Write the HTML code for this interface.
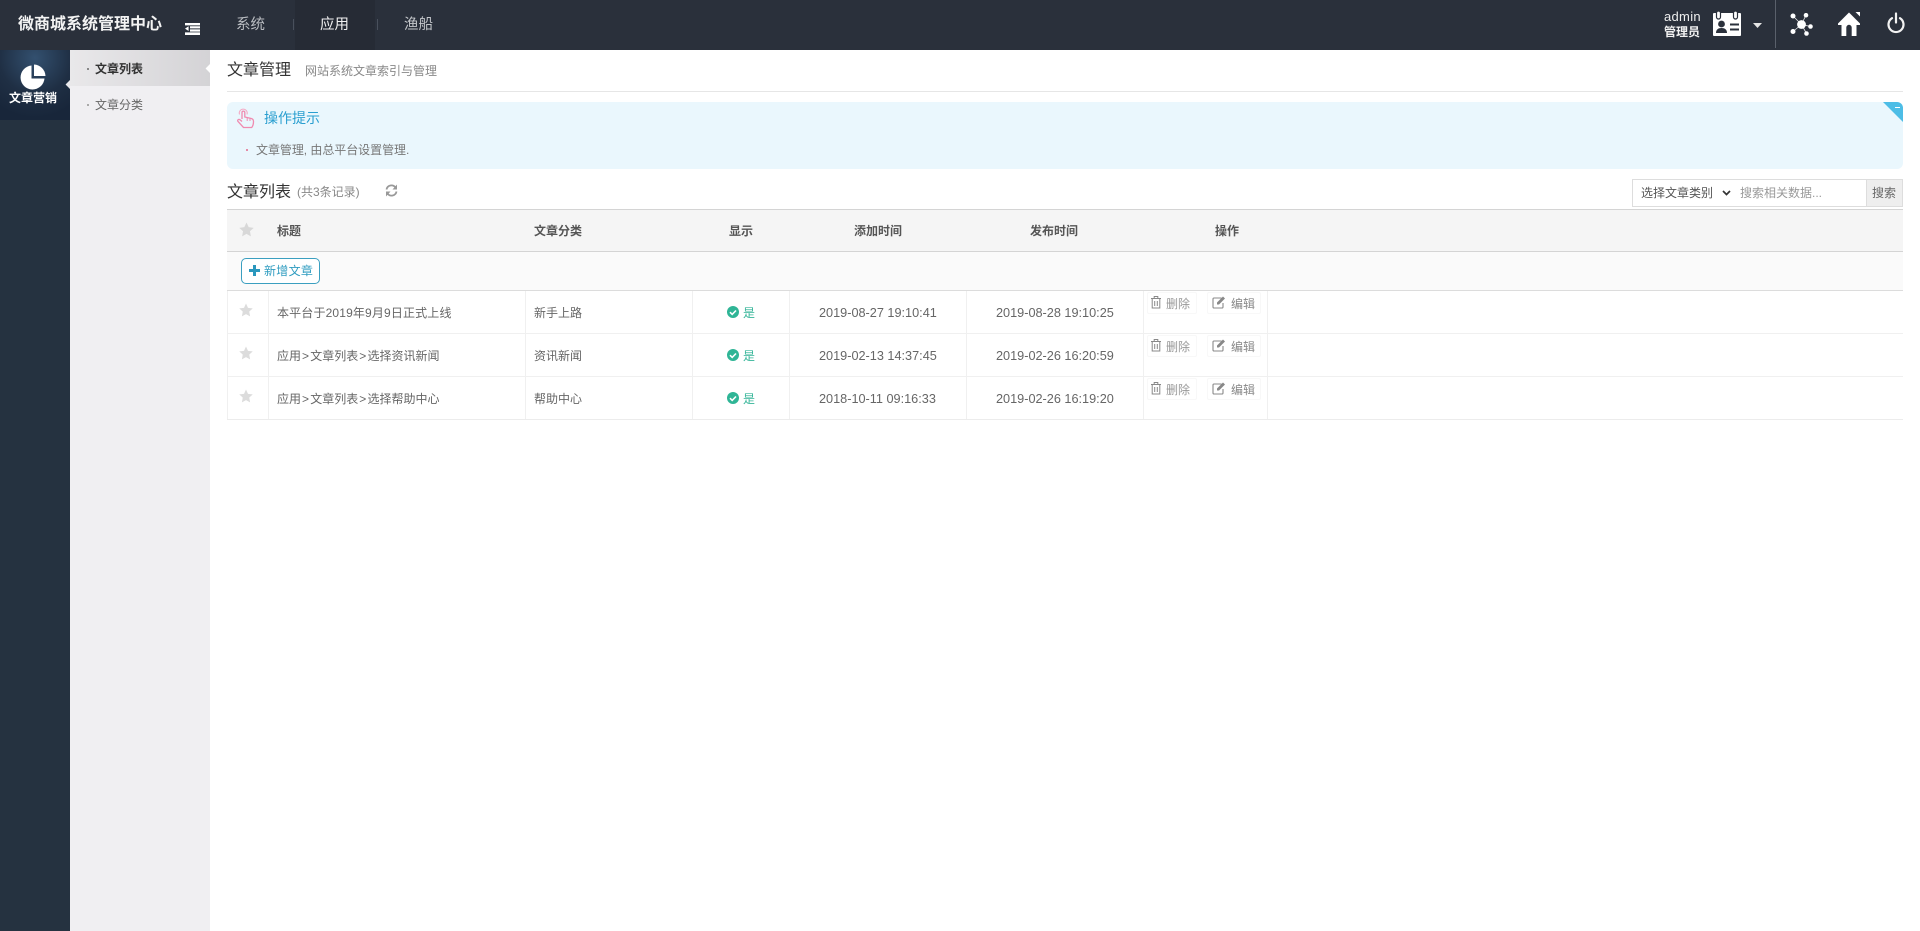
<!DOCTYPE html>
<html lang="zh"><head><meta charset="utf-8"><title>文章管理</title>
<style>
*{box-sizing:border-box}
html,body{margin:0;padding:0;width:1920px;height:931px;overflow:hidden;background:#fff;font-family:"Liberation Sans","Noto Sans CJK SC",sans-serif;font-size:12px;color:#666}
.a{position:absolute;white-space:nowrap}
.t{position:absolute;white-space:nowrap;line-height:20px;height:20px}
.b{position:absolute}
svg{position:absolute;display:block}
.d{font-size:12.7px;color:#666}
.h{font-weight:bold;color:#555}
.g{letter-spacing:1.2px;margin-left:1px}
.op{position:absolute;height:22px;background:#fff;border:1px solid #f8f8f8;border-radius:2px}
</style></head><body>

<!-- top bar -->
<div class="b" style="left:0;top:0;width:1920px;height:50px;background:#2a303b"></div>
<div class="b" style="left:295px;top:0;width:80px;height:50px;background:#262b35"></div>
<div class="b" style="left:293px;top:19px;width:1px;height:11px;background:#49505c"></div>
<div class="b" style="left:377px;top:19px;width:1px;height:11px;background:#49505c"></div>
<div class="t" style="left:18px;top:15px;font-size:16px;font-weight:bold;color:#f3f3f3">微商城系统管理中心</div>
<svg style="left:185px;top:23px" width="15" height="12" viewBox="0 0 15 12"><path d="M0 0h15v2.4H0zM5 3.2h10v2.2H5zM5 6.4h10v2.2H5zM0 9.4h15V12H0zM0 5.6L3.6 3.2V8z" fill="#fff"/></svg>
<div class="t" style="left:236px;top:15px;font-size:14.5px;color:#b9bcc1">系统</div>
<div class="t" style="left:320px;top:15px;font-size:14.5px;color:#f2f2f2">应用</div>
<div class="t" style="left:404px;top:15px;font-size:14.5px;color:#c4c7cb">渔船</div>

<div class="a" style="left:1664px;top:9px;font-size:13px;line-height:15px;color:#eee;letter-spacing:.3px">admin</div>
<div class="a" style="left:1664px;top:24px;font-size:12px;line-height:16px;font-weight:bold;color:#f1f1f1">管理员</div>
<svg style="left:1713px;top:10px" width="30" height="28" viewBox="0 0 30 28"><path d="M1 3h26a1 1 0 0 1 1 1v21a1 1 0 0 1-1 1H1a1 1 0 0 1-1-1V4a1 1 0 0 1 1-1z" fill="#fff"/><rect x="3.500" y="1" width="4" height="8" rx="2" fill="#fff" stroke="#2a303b" stroke-width="1.200"/><rect x="20.500" y="1" width="4" height="8" rx="2" fill="#fff" stroke="#2a303b" stroke-width="1.200"/><circle cx="8.500" cy="14" r="3.400" fill="#2a303b"/><path d="M3 23c0-3.500 2.200-5 5.500-5s5.500 1.500 5.500 5z" fill="#2a303b"/><path d="M17 13.500h9v2h-9zM17 18.500h9v2h-9z" fill="#2a303b"/></svg>
<svg style="left:1753px;top:23px" width="9" height="5" viewBox="0 0 9 5"><path d="M0 0h9L4.500 5z" fill="#e5e5e5"/></svg>
<div class="b" style="left:1775px;top:0;width:1px;height:48px;background:#5a606b"></div>
<svg style="left:1790px;top:13px" width="23" height="23" viewBox="0 0 23 23"><path d="M3 3L11.500 11.500M16 2L11.500 11.500M20.500 13.500L11.500 11.500M16.500 20.500L11.500 11.500M3 18.500L11.500 11.500" stroke="#e8e8e8" stroke-width=".8"/><circle cx="11.500" cy="11.500" r="4.400" fill="#fff"/><circle cx="3" cy="3" r="2.500" fill="#fff"/><circle cx="16" cy="2.200" r="2.300" fill="#fff"/><circle cx="20.500" cy="13.500" r="2.300" fill="#fff"/><circle cx="16.500" cy="20.500" r="2.300" fill="#fff"/><circle cx="3" cy="18.500" r="2.500" fill="#fff"/></svg>
<svg style="left:1837px;top:11px" width="24" height="25" viewBox="0 0 24 25"><path d="M12 1.500L1 12.500V14h3.500v11h4.800v-8.500a2.700 2.700 0 0 1 5.400 0V25h4.800V14H23v-1.500z" fill="#fff"/><path d="M18.500 1h4.500v4.500z" fill="#fff"/></svg>
<svg style="left:1887px;top:12px" width="18" height="22" viewBox="0 0 18 22"><path d="M5 6.200a7.500 7.500 0 1 0 8 0" fill="none" stroke="#f2f2f2" stroke-width="2.200" stroke-linecap="round"/><path d="M9 1.500v9" stroke="#f2f2f2" stroke-width="2.200" stroke-linecap="round"/></svg>

<!-- left sidebars -->
<div class="b" style="left:0;top:50px;width:70px;height:881px;background:#253240"></div>
<div class="b" style="left:0;top:50px;width:70px;height:70px;background:radial-gradient(ellipse 60px 60px at 35px 8px,#33506f 0%,#1f2f44 60%,#18263a 100%)"></div>
<svg style="left:20px;top:64px" width="26" height="26" viewBox="0 0 26 26"><path d="M11.500 1.500A12 12 0 1 0 24.500 14.500H11.500z" fill="#fff"/><path d="M14 0.500A12 12 0 0 1 25.500 12H14z" fill="#fff"/></svg>
<div class="t" style="left:9px;top:88px;font-size:12px;font-weight:bold;color:#fff">文章营销</div>
<div class="b" style="left:66.500px;top:80.500px;width:7px;height:7px;background:#e9e9ec;transform:rotate(45deg)"></div>
<div class="b" style="left:70px;top:50px;width:140px;height:881px;background:#f0eff2"></div>
<div class="b" style="left:70px;top:50px;width:140px;height:36px;background:linear-gradient(90deg,#e9e8ea,#d4d3d6)"></div>
<div class="b" style="left:206.500px;top:64.500px;width:7px;height:7px;background:#fff;transform:rotate(45deg)"></div>
<div class="b" style="left:87px;top:68px;width:2px;height:2px;background:#888"></div>
<div class="b" style="left:87px;top:104px;width:2px;height:2px;background:#aaa"></div>
<div class="t" style="left:95px;top:59px;color:#333;font-weight:bold">文章列表</div>
<div class="t" style="left:95px;top:95px;color:#666">文章分类</div>

<!-- heading -->
<div class="t" style="left:227px;top:61px;font-size:16px;color:#333">文章管理</div>
<div class="t" style="left:305px;top:61px;color:#888">网站系统文章索引与管理</div>
<div class="b" style="left:227px;top:91px;width:1676px;height:1px;background:#e6e6e6"></div>

<!-- tips -->
<div class="b" style="left:227px;top:102px;width:1676px;height:67px;background:#eaf7fd;border-radius:6px;overflow:hidden"><div class="b" style="right:0;top:0;width:0;height:0;border-style:solid;border-width:0 20px 20px 0;border-color:transparent #4dbde6 transparent transparent"></div></div>
<div class="b" style="left:1895px;top:107px;width:5px;height:1px;background:#fff"></div>
<svg style="left:236px;top:107px" width="19" height="22" viewBox="0 0 19 22"><path d="M6 12V5.500a1.400 1.400 0 0 1 2.800 0V10l6.500 1.500c1.500.4 2.200 1.300 2.200 3 0 3-.5 4.500-1.800 6H7.500L2 14.500c-.8-1 0-2.500 1.500-2 .8.300 1.500 1 2.500 2" fill="none" stroke="#f08bb0" stroke-width="1.300"/><path d="M11.200 10.500v3.500M14 11v3" stroke="#f08bb0" stroke-width="1"/><path d="M3.500 7.500a4 4 0 1 1 7.500 0" fill="none" stroke="#f5a9c4" stroke-width="1"/></svg>
<div class="t" style="left:264px;top:108px;font-size:14px;color:#2a9fd0">操作提示</div>
<div class="b" style="left:246px;top:149px;width:2px;height:2px;background:#e58ba6"></div>
<div class="t" style="left:256px;top:140px;color:#777;letter-spacing:-.05px">文章管理, 由总平台设置管理.</div>

<!-- list title -->
<div class="t" style="left:227px;top:183px;font-size:16px;color:#333">文章列表</div>
<div class="t" style="left:297px;top:182px;color:#888">(共3条记录)</div>
<svg style="left:385px;top:184px" width="13" height="13" viewBox="0 0 13 13"><path d="M1.500 5.500A5 5 0 0 1 10.500 3.500M11.500 7.500A5 5 0 0 1 2.500 9.500" fill="none" stroke="#999" stroke-width="1.800"/><path d="M12 0.500V5.500H7.500zM1 12.500V7.500H5.500z" fill="#999"/></svg>

<!-- search -->
<div class="b" style="left:1632px;top:179px;width:271px;height:28px;background:#fff;border:1px solid #ddd"></div>
<div class="b" style="left:1866px;top:180px;width:36px;height:26px;background:#eee;border-left:1px solid #ddd"></div>
<div class="t" style="left:1641px;top:183px;color:#555">选择文章类别</div>
<svg style="left:1722px;top:190px" width="9" height="6" viewBox="0 0 9 6"><path d="M1 1l3.500 3.500L8 1" fill="none" stroke="#333" stroke-width="1.700"/></svg>
<div class="t" style="left:1740px;top:183px;color:#999">搜索相关数据...</div>
<div class="t" style="left:1872px;top:183px;color:#666">搜索</div>

<!-- table head -->
<div class="b" style="left:227px;top:209px;width:1676px;height:43px;background:#f5f5f5;border-top:1px solid #d4d4d4;border-bottom:1px solid #d4d4d4"></div>
<div class="b" style="left:227px;top:252px;width:1676px;height:39px;background:#fafafa;border-bottom:1px solid #dcdcdc"></div>
<svg style="left:239px;top:222px" width="15" height="15" viewBox="0 0 16 16"><path d="M8 .5l2.300 5 5.400.7-4 3.700 1 5.400L8 12.700l-4.700 2.600 1-5.400-4-3.700 5.400-.7z" fill="#d8d8d8"/></svg>
<div class="t h" style="left:277px;top:221px">标题</div>
<div class="t h" style="left:534px;top:221px">文章分类</div>
<div class="t h" style="left:729px;top:221px">显示</div>
<div class="t h" style="left:854px;top:221px">添加时间</div>
<div class="t h" style="left:1030px;top:221px">发布时间</div>
<div class="t h" style="left:1215px;top:221px">操作</div>

<div class="b" style="left:241px;top:258px;width:79px;height:26px;background:#fff;border:1px solid #3b9fc0;border-radius:5px"></div>
<svg style="left:249px;top:265px" width="11" height="11" viewBox="0 0 11 11"><path d="M4 0h3v4h4v3H7v4H4V7H0V4h4z" fill="#2a97bd"/></svg>
<div class="t" style="left:264px;top:261px;color:#2f9cc0;letter-spacing:.3px">新增文章</div>

<!-- rows -->
<div class="b" style="left:227px;top:333px;width:1676px;height:1px;background:#f0f0f0"></div>
<div class="b" style="left:227px;top:376px;width:1676px;height:1px;background:#f0f0f0"></div>
<div class="b" style="left:227px;top:419px;width:1676px;height:1px;background:#ececec"></div>
<div class="b" style="left:227px;top:291px;width:1px;height:128px;background:#f0f0f0"></div>
<div class="b" style="left:268px;top:291px;width:1px;height:128px;background:#f0f0f0"></div>
<div class="b" style="left:525px;top:291px;width:1px;height:128px;background:#f0f0f0"></div>
<div class="b" style="left:692px;top:291px;width:1px;height:128px;background:#f0f0f0"></div>
<div class="b" style="left:789px;top:291px;width:1px;height:128px;background:#f0f0f0"></div>
<div class="b" style="left:966px;top:291px;width:1px;height:128px;background:#f0f0f0"></div>
<div class="b" style="left:1143px;top:291px;width:1px;height:128px;background:#f0f0f0"></div>
<div class="b" style="left:1267px;top:291px;width:1px;height:128px;background:#f0f0f0"></div>

<!-- row 1 -->
<svg style="left:239px;top:303px" width="14" height="14" viewBox="0 0 16 16"><path d="M8 .5l2.300 5 5.400.7-4 3.700 1 5.400L8 12.700l-4.700 2.600 1-5.400-4-3.700 5.400-.7z" fill="#dcdcdc"/></svg>
<div class="t" style="left:277px;top:303px;letter-spacing:.15px">本平台于2019年9月9日正式上线</div>
<div class="t" style="left:534px;top:303px">新手上路</div>
<svg style="left:727px;top:306px" width="12" height="12" viewBox="0 0 12 12"><circle cx="6" cy="6" r="6" fill="#2fb596"/><path d="M3 6.200l2.200 2.200L9 4.500" fill="none" stroke="#fff" stroke-width="1.600"/></svg>
<div class="t" style="left:743px;top:303px;color:#35b598">是</div>
<div class="t d" style="left:819px;top:303px">2019-08-27 19:10:41</div>
<div class="t d" style="left:996px;top:303px">2019-08-28 19:10:25</div>
<div class="op" style="left:1147px;top:292px;width:50px"></div><div class="op" style="left:1207px;top:292px;width:54px"></div>
<svg style="left:1150px;top:295px" width="12" height="14" viewBox="0 0 12 14"><path d="M1 3.500h10M4.200 3.500V1.500h3.600v2M2.200 3.500v9.500h7.600V3.500M4.700 6v5M7.300 6v5" fill="none" stroke="#888" stroke-width="1"/></svg>
<div class="t" style="left:1166px;top:294px;color:#999">删除</div>
<svg style="left:1212px;top:296px" width="15" height="13" viewBox="0 0 15 13"><path d="M9.500 2H2a1 1 0 0 0-1 1v8a1 1 0 0 0 1 1h8a1 1 0 0 0 1-1V7" fill="none" stroke="#888" stroke-width="1.100"/><path d="M5 6.500L11 .5l2 2-6 6H5z" fill="#888"/></svg>
<div class="t" style="left:1231px;top:294px;color:#888">编辑</div>

<!-- row 2 -->
<svg style="left:239px;top:346px" width="14" height="14" viewBox="0 0 16 16"><path d="M8 .5l2.300 5 5.400.7-4 3.700 1 5.400L8 12.700l-4.700 2.600 1-5.400-4-3.700 5.400-.7z" fill="#dcdcdc"/></svg>
<div class="t" style="left:277px;top:346px">应用<span class="g">&gt;</span>文章列表<span class="g">&gt;</span>选择资讯新闻</div>
<div class="t" style="left:534px;top:346px">资讯新闻</div>
<svg style="left:727px;top:349px" width="12" height="12" viewBox="0 0 12 12"><circle cx="6" cy="6" r="6" fill="#2fb596"/><path d="M3 6.200l2.200 2.200L9 4.500" fill="none" stroke="#fff" stroke-width="1.600"/></svg>
<div class="t" style="left:743px;top:346px;color:#35b598">是</div>
<div class="t d" style="left:819px;top:346px">2019-02-13 14:37:45</div>
<div class="t d" style="left:996px;top:346px">2019-02-26 16:20:59</div>
<div class="op" style="left:1147px;top:335px;width:50px"></div><div class="op" style="left:1207px;top:335px;width:54px"></div>
<svg style="left:1150px;top:338px" width="12" height="14" viewBox="0 0 12 14"><path d="M1 3.500h10M4.200 3.500V1.500h3.600v2M2.200 3.500v9.500h7.600V3.500M4.700 6v5M7.300 6v5" fill="none" stroke="#888" stroke-width="1"/></svg>
<div class="t" style="left:1166px;top:337px;color:#999">删除</div>
<svg style="left:1212px;top:339px" width="15" height="13" viewBox="0 0 15 13"><path d="M9.500 2H2a1 1 0 0 0-1 1v8a1 1 0 0 0 1 1h8a1 1 0 0 0 1-1V7" fill="none" stroke="#888" stroke-width="1.100"/><path d="M5 6.500L11 .5l2 2-6 6H5z" fill="#888"/></svg>
<div class="t" style="left:1231px;top:337px;color:#888">编辑</div>

<!-- row 3 -->
<svg style="left:239px;top:389px" width="14" height="14" viewBox="0 0 16 16"><path d="M8 .5l2.300 5 5.400.7-4 3.700 1 5.400L8 12.700l-4.700 2.600 1-5.400-4-3.700 5.400-.7z" fill="#dcdcdc"/></svg>
<div class="t" style="left:277px;top:389px">应用<span class="g">&gt;</span>文章列表<span class="g">&gt;</span>选择帮助中心</div>
<div class="t" style="left:534px;top:389px">帮助中心</div>
<svg style="left:727px;top:392px" width="12" height="12" viewBox="0 0 12 12"><circle cx="6" cy="6" r="6" fill="#2fb596"/><path d="M3 6.200l2.200 2.200L9 4.500" fill="none" stroke="#fff" stroke-width="1.600"/></svg>
<div class="t" style="left:743px;top:389px;color:#35b598">是</div>
<div class="t d" style="left:819px;top:389px">2018-10-11 09:16:33</div>
<div class="t d" style="left:996px;top:389px">2019-02-26 16:19:20</div>
<div class="op" style="left:1147px;top:378px;width:50px"></div><div class="op" style="left:1207px;top:378px;width:54px"></div>
<svg style="left:1150px;top:381px" width="12" height="14" viewBox="0 0 12 14"><path d="M1 3.500h10M4.200 3.500V1.500h3.600v2M2.200 3.500v9.500h7.600V3.500M4.700 6v5M7.300 6v5" fill="none" stroke="#888" stroke-width="1"/></svg>
<div class="t" style="left:1166px;top:380px;color:#999">删除</div>
<svg style="left:1212px;top:382px" width="15" height="13" viewBox="0 0 15 13"><path d="M9.500 2H2a1 1 0 0 0-1 1v8a1 1 0 0 0 1 1h8a1 1 0 0 0 1-1V7" fill="none" stroke="#888" stroke-width="1.100"/><path d="M5 6.500L11 .5l2 2-6 6H5z" fill="#888"/></svg>
<div class="t" style="left:1231px;top:380px;color:#888">编辑</div>

</body></html>
